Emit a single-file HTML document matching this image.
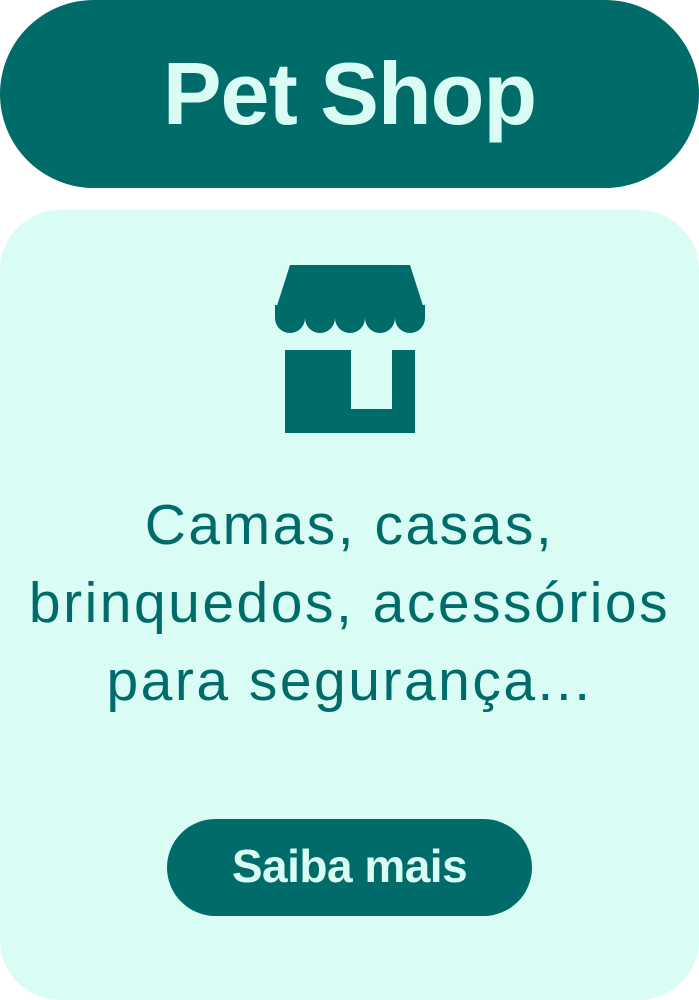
<!DOCTYPE html>
<html><head><meta charset="utf-8"><style>
body{margin:0;width:699px;height:1000px;background:#fff;font-family:"Liberation Sans",sans-serif;overflow:hidden;position:relative}
.hd{position:absolute;left:0;top:0;width:699px;height:188px;border-radius:94px;background:#006c6a;color:#d9fdf4;font-weight:bold;font-size:88px;letter-spacing:-1px;text-align:center;line-height:188px}
.card{position:absolute;left:0;top:210px;width:699px;height:790px;border-radius:60px;background:#d9fdf4}
.txt{position:absolute;left:0;top:486px;width:699px;text-align:center;color:#006c6a;font-size:57px;line-height:78px;letter-spacing:2.5px;white-space:nowrap}
.btn{position:absolute;left:167px;top:819px;width:365px;height:97px;border-radius:49px;background:#006c6a;color:#d9fdf4;font-weight:bold;font-size:46px;letter-spacing:-0.5px;text-align:center;line-height:95px}
</style></head><body>
<div class="hd">Pet Shop</div>
<div class="card"></div>
<svg style="position:absolute;left:0;top:0" width="699" height="1000">
<g fill="#006c6a">
<path d="M290 265H410L425 312H275Z"/>
<rect x="275" y="305" width="150" height="13"/>
<circle cx="290" cy="318" r="15"/><circle cx="320" cy="318" r="15"/><circle cx="350" cy="318" r="15"/><circle cx="380" cy="318" r="15"/><circle cx="410" cy="318" r="15"/>
<path d="M285 350H351V409H392V350H415V433H285Z"/>
</g></svg>
<div class="txt">Camas, casas,<br>brinquedos, acessórios<br>para segurança...</div>
<div class="btn">Saiba mais</div>
</body></html>
